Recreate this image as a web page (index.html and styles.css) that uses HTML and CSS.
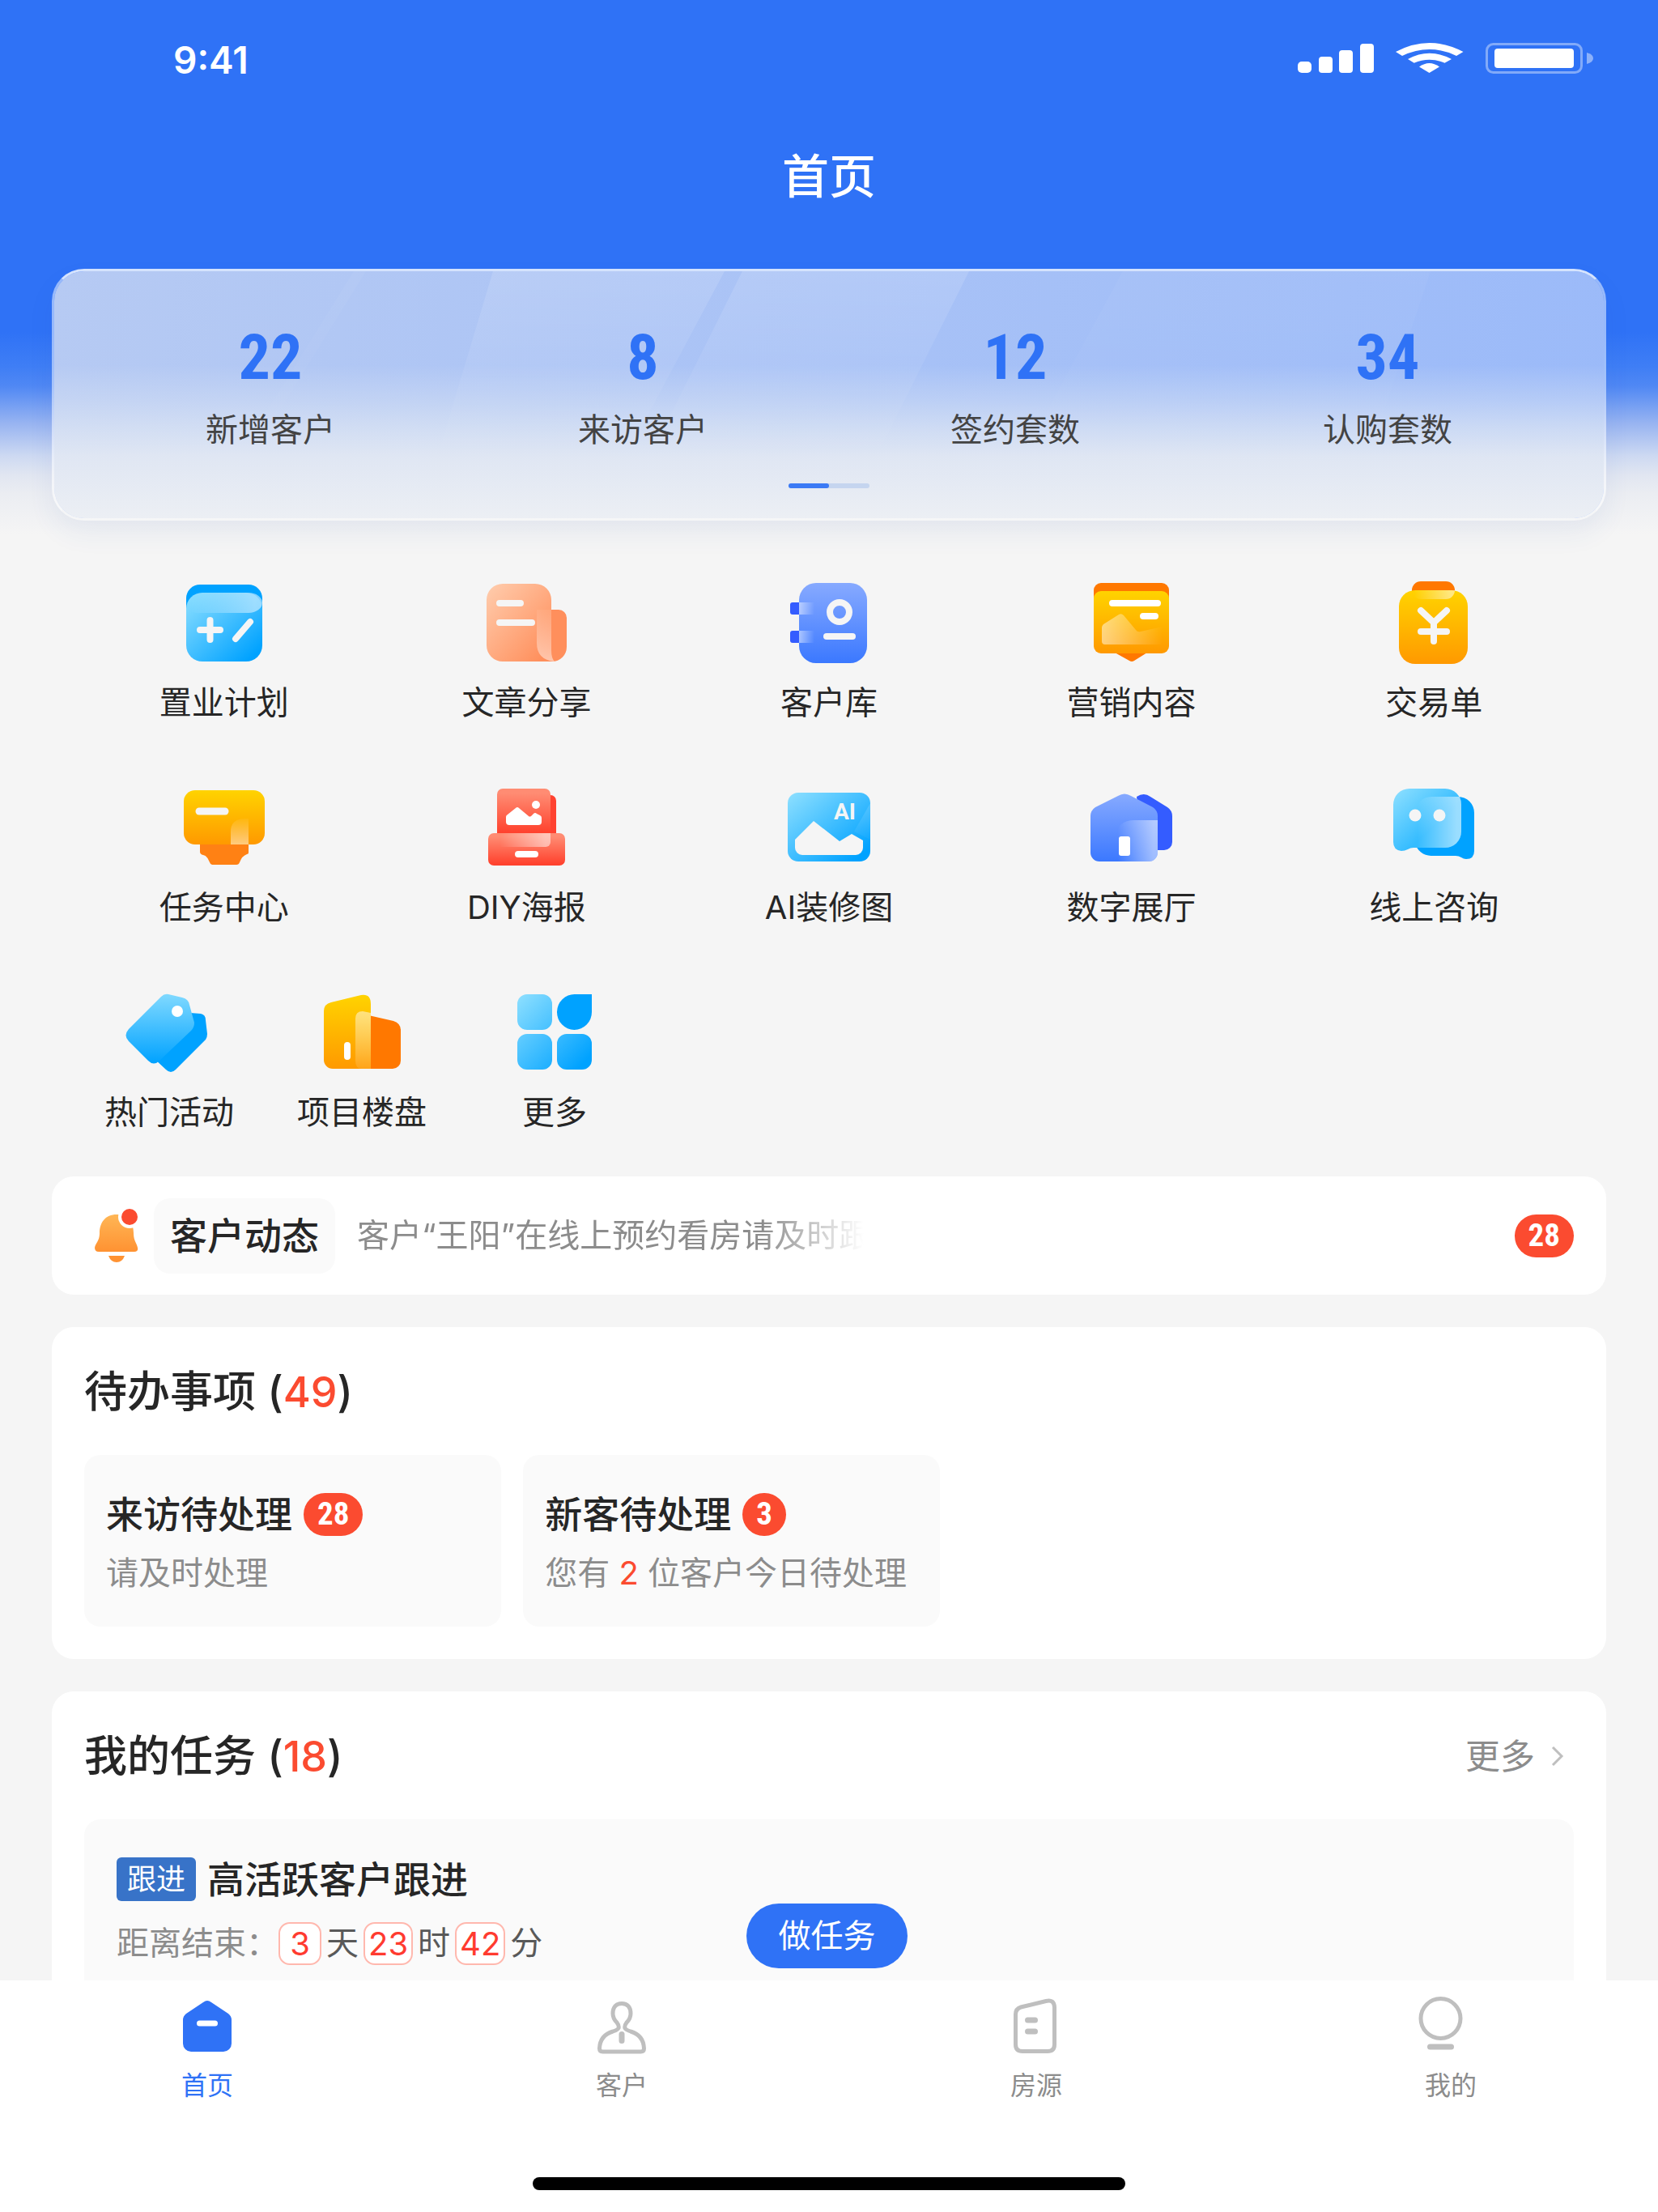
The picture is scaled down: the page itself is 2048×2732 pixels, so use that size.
FILE: index.html
```html
<!DOCTYPE html>
<html lang="zh-CN">

<head>
    <meta charset="UTF-8">
    <meta name="viewport" content="width=device-width, initial-scale=1.0">
    <title>首页</title>
    <link rel="stylesheet" href="styles.css">
</head>

<body>
    <!-- shared gradients -->
    <svg class="defs" width="0" height="0" aria-hidden="true">
        <defs>
            <linearGradient id="sky" x1="0" y1="0" x2="1" y2="1">
                <stop offset="0" stop-color="#8fe0ff" />
                <stop offset="0.9" stop-color="#00a2ff" />
            </linearGradient>
            <linearGradient id="skyDown" x1="0" y1="0" x2="0" y2="1">
                <stop offset="0" stop-color="#80d9ff" />
                <stop offset="1" stop-color="#00a2ff" />
            </linearGradient>
            <linearGradient id="chat" x1="0" y1="0" x2="1" y2="1">
                <stop offset="0" stop-color="#8fe0ff" />
                <stop offset="0.6" stop-color="#35bcff" />
                <stop offset="1" stop-color="#35bcff" />
            </linearGradient>
            <linearGradient id="peach" x1="0" y1="0" x2="1" y2="1">
                <stop offset="0" stop-color="#ffcdae" />
                <stop offset="0.9" stop-color="#ff8f5c" />
            </linearGradient>
            <linearGradient id="indigo" x1="0" y1="0" x2="0" y2="1">
                <stop offset="0" stop-color="#87aaff" />
                <stop offset="1" stop-color="#3b78ff" />
            </linearGradient>
            <linearGradient id="gold" x1="0" y1="0" x2="0" y2="1">
                <stop offset="0" stop-color="#ffd300" />
                <stop offset="1" stop-color="#ff9900" />
            </linearGradient>
            <linearGradient id="coral" x1="0" y1="0" x2="0" y2="1">
                <stop offset="0.1" stop-color="#ff8c73" />
                <stop offset="0.95" stop-color="#ff422e" />
            </linearGradient>
            <linearGradient id="orange" x1="0" y1="0" x2="0" y2="1">
                <stop offset="0" stop-color="#ffb655" />
                <stop offset="1" stop-color="#ff9232" />
            </linearGradient>
            <linearGradient id="shineRight" x1="0" y1="0" x2="1" y2="0">
                <stop offset="0.05" stop-color="#fff" stop-opacity="0" />
                <stop offset="0.9" stop-color="#fff" stop-opacity="0.5" />
            </linearGradient>
            <linearGradient id="shineLeft" x1="0" y1="0" x2="1" y2="0">
                <stop offset="0" stop-color="#fff" stop-opacity="0.5" />
                <stop offset="1" stop-color="#fff" stop-opacity="0" />
            </linearGradient>
            <linearGradient id="shineDown" x1="0" y1="0" x2="0" y2="1">
                <stop offset="0" stop-color="#fff" stop-opacity="0.05" />
                <stop offset="1" stop-color="#fff" stop-opacity="0.5" />
            </linearGradient>
            <linearGradient id="shineUp" x1="0" y1="0" x2="0" y2="1">
                <stop offset="0" stop-color="#fff" stop-opacity="0.5" />
                <stop offset="1" stop-color="#fff" stop-opacity="0.1" />
            </linearGradient>
            <linearGradient id="streak" x1="0" y1="0" x2="0" y2="1">
                <stop offset="0" stop-color="#fff" stop-opacity="0.13" />
                <stop offset="1" stop-color="#fff" stop-opacity="0" />
            </linearGradient>
        </defs>
    </svg>

    <div class="page">
        <header class="header">
            <div class="status-bar">
                <span class="time">9:41</span>
                <svg class="status-icons" viewBox="0 0 365 42" aria-hidden="true">
                    <g fill="#fff">
                        <rect x="0" y="25" width="17" height="14" rx="5" />
                        <rect x="26" y="19" width="17" height="20" rx="4" />
                        <rect x="51" y="11" width="17" height="28" rx="4" />
                        <rect x="77" y="3" width="17" height="36" rx="4" />
                        <path d="M121 13Q162.500 -9 204.500 13L196 18Q162.500 2 129 18Z" />
                        <path d="M136 22Q162.500 7.400 190 22L181.500 26.700Q162.500 18.700 143.700 26.700Z" />
                        <path d="M150 31.500Q162.500 22.500 175 31.500L162.500 39Z" />
                        <rect x="243" y="9" width="98" height="24" rx="4" />
                    </g>
                    <rect x="233.500" y="3.500" width="117" height="35" rx="8" fill="none" stroke="#fff" stroke-width="3" opacity="0.4" />
                    <path d="M357 14q8 2 8 7t-8 7z" fill="#fff" opacity="0.45" />
                </svg>
            </div>
            <h1 class="title">首页</h1>
        </header>

        <main class="content">
            <section class="stats">
                <svg class="stats-bg" viewBox="0 0 1914 305" preserveAspectRatio="none" aria-hidden="true">
                    <path d="M542 0H828L700 240H470Z" fill="url(#streak)" />
                    <path d="M850 0H1130L1010 240H730Z" fill="url(#streak)" />
                    <path d="M370 0H385L230 250H215Z" fill="url(#streak)" opacity="0.3" />
                    <path d="M1320 0H1700L1620 240H1190Z" fill="url(#streak)" opacity="0.3" />
                </svg>
                <ul class="stats-list">
                    <li><strong>22</strong><span>新增客户</span></li>
                    <li><strong>8</strong><span>来访客户</span></li>
                    <li><strong>12</strong><span>签约套数</span></li>
                    <li><strong>34</strong><span>认购套数</span></li>
                </ul>
                <div class="slider"><i></i></div>
            </section>

            <nav class="menu">
                <div class="menu-row">
                    <a href="#" class="menu-item">
                        <svg viewBox="0 0 112 112">
                            <rect x="9" y="10" width="94" height="50" rx="17" fill="#00a2ff" />
                            <rect x="9" y="20" width="94" height="85" rx="20" fill="url(#sky)" />
                            <path d="M29 20H86a17 12.500 0 0 1 0 25H26a17 17 0 0 1-17-8A20 20 0 0 1 29 20Z" fill="url(#shineRight)" />
                            <path d="M26 66H51M38.500 54V78M70 77L88 56" stroke="#f5f5f5" stroke-width="8" stroke-linecap="round" />
                        </svg>
                        <span>置业计划</span>
                    </a>
                    <a href="#" class="menu-item">
                        <svg viewBox="0 0 112 112">
                            <path d="M80 41H96a10 10 0 0 1 10 10V87a18 18 0 0 1-18 18H80Z" fill="#ff8f5c" />
                            <path d="M27 9H67a20 20 0 0 1 20 20V91q0 10 4 14H27A20 20 0 0 1 7 85V29A20 20 0 0 1 27 9Z" fill="url(#peach)" />
                            <path d="M69 41H87V91q0 10 4 14Q69 103 69 82Z" fill="url(#shineDown)" />
                            <path d="M23 33H49M23 57H63" stroke="#f5f5f5" stroke-width="8" stroke-linecap="round" />
                        </svg>
                        <span>文章分享</span>
                    </a>
                    <a href="#" class="menu-item">
                        <svg viewBox="0 0 112 112">
                            <rect x="8" y="32" width="20" height="15" rx="3" fill="#345cff" />
                            <rect x="8" y="67" width="20" height="15" rx="3" fill="#345cff" />
                            <rect x="19" y="8" width="84" height="99" rx="21" fill="url(#indigo)" />
                            <path d="M19 32H38V47H19ZM19 67H38V82H19Z" fill="url(#shineLeft)" />
                            <circle cx="69" cy="44" r="12" fill="none" stroke="#f5f5f5" stroke-width="8" />
                            <path d="M53 74H85" stroke="#f5f5f5" stroke-width="8" stroke-linecap="round" />
                        </svg>
                        <span>客户库</span>
                    </a>
                    <a href="#" class="menu-item">
                        <svg viewBox="0 0 112 112">
                            <rect x="9" y="8" width="93" height="40" rx="9" fill="#ff7800" />
                            <path d="M35 94H75L59 104Q56 106 53 104Z" fill="#ff7800" />
                            <rect x="9" y="18" width="93" height="77" rx="9" fill="url(#gold)" />
                            <path d="M19 63Q19 61 21 59L40 47Q43 45 46 48L61 66Q63 69 67 68L94 62V84H23Q19 84 19 80Z" fill="url(#shineLeft)" />
                            <path d="M32 33H88M70 49H85" stroke="#fff" stroke-width="8" stroke-linecap="round" />
                        </svg>
                        <span>营销内容</span>
                    </a>
                    <a href="#" class="menu-item">
                        <svg viewBox="0 0 112 112">
                            <rect x="29" y="6" width="53" height="22" rx="11" fill="#ff7800" />
                            <rect x="13" y="17" width="85" height="91" rx="20" fill="url(#gold)" />
                            <path d="M29 17H82a11 11 0 0 1-11 11H40A11 11 0 0 1 29 17Z" fill="url(#shineRight)" />
                            <path d="M40 42L56 57L72 42M56 57V80M40 68H72" fill="none" stroke="#f5f5f5" stroke-width="8" stroke-linecap="round" />
                        </svg>
                        <span>交易单</span>
                    </a>
                </div>

                <div class="menu-row">
                    <a href="#" class="menu-item">
                        <svg viewBox="0 0 112 112">
                            <path d="M26 76H86V88Q86 90 84 90Q78 92 75 100Q74 103 71 103H41Q39 103 38 100Q35 92 30 91Q26 90 26 87Z" fill="#ff8114" />
                            <rect x="6" y="11" width="100" height="67" rx="14" fill="url(#gold)" />
                            <path d="M64 78V62Q64 46 82 46H86V78Z" fill="url(#shineDown)" />
                            <path d="M25 37H57" stroke="#f5f5f5" stroke-width="9" stroke-linecap="round" />
                        </svg>
                        <span>任务中心</span>
                    </a>
                    <a href="#" class="menu-item">
                        <svg viewBox="0 0 112 112">
                            <rect x="60" y="17" width="33" height="55" rx="7" fill="#ff4230" />
                            <path d="M27 9H79a7 7 0 0 1 7 7V66H20V16a7 7 0 0 1 7-7Z" fill="url(#coral)" />
                            <rect x="9" y="64" width="95" height="40" rx="7" fill="url(#coral)" />
                            <path d="M20 64H86V75a6 6 0 0 1-6 6H20Z" fill="url(#shineRight)" />
                            <path d="M31 44Q31 42 33 41L43 33Q45 31 47 33L59 43Q60 44 62 43L65 40Q67 38 69 40L73 42Q75 43 75 45V50Q75 54 71 54H35Q31 54 31 50Z" fill="#fff" />
                            <circle cx="68" cy="29" r="5" fill="#fff" />
                            <path d="M46 90H67" stroke="#fff" stroke-width="8" stroke-linecap="round" />
                        </svg>
                        <span>DIY海报</span>
                    </a>
                    <a href="#" class="menu-item">
                        <svg viewBox="0 0 112 112">
                            <rect x="5" y="14" width="102" height="85" rx="13" fill="url(#sky)" />
                            <path d="M107 27L87 62L107 72Z" fill="url(#shineUp)" opacity="0.3" />
                            <path d="M14 72L37 49L69 74L84 65L98 73V82a9 9 0 0 1-9 9H23a9 9 0 0 1-9-9Z" fill="#f5f5f5" />
                            <text x="62" y="47" class="ai-mark">AI</text>
                        </svg>
                        <span>AI装修图</span>
                    </a>
                    <a href="#" class="menu-item">
                        <svg viewBox="0 0 112 112">
                            <path d="M62 19Q71 13 79 19L100 32Q106 36 106 43V75a10 10 0 0 1-10 10H70Z" fill="#345cff" />
                            <path d="M39 18Q47 13 55 18L82 32Q88 36 88 43V88a11 11 0 0 1-11 11H16A11 11 0 0 1 5 88V43Q5 36 11 32Z" fill="url(#indigo)" />
                            <path d="M36 66Q40 48 59 48H88V88a11 11 0 0 1-11 11H36Z" fill="url(#shineRight)" />
                            <rect x="40" y="68" width="14" height="24" rx="3" fill="#fff" />
                        </svg>
                        <span>数字展厅</span>
                    </a>
                    <a href="#" class="menu-item">
                        <svg viewBox="0 0 112 112">
                            <path d="M53 19H86a20 20 0 0 1 20 20V86Q106 96 96 96Q93 96 90 94Q87 92 83 92H53A20 20 0 0 1 33 76V39A20 20 0 0 1 53 19Z" fill="#00a2ff" />
                            <path d="M26 9H70a20 20 0 0 1 20 20V62a20 20 0 0 1-20 20H31Q27 82 24 84Q20 86 16 86Q6 85 6 75V29A20 20 0 0 1 26 9Z" fill="url(#chat)" />
                            <path d="M53 19H88Q90 23 90 29V62a20 20 0 0 1-20 20H34L33 39A20 20 0 0 1 53 19Z" fill="url(#shineRight)" />
                            <circle cx="33" cy="42" r="7.500" fill="#f5f5f5" />
                            <circle cx="63" cy="42" r="7.500" fill="#f5f5f5" />
                        </svg>
                        <span>线上咨询</span>
                    </a>
                </div>

                <div class="menu-row menu-row-last">
                    <a href="#" class="menu-item">
                        <svg viewBox="0 0 112 112">
                            <path d="M82 33L95 34Q101 35 101 42L103 59Q103 63 101 66L64 103Q58 109 52 103L38 90Z" fill="#00a2ff" />
                            <path d="M46 13Q50 9 55 10L72 14Q80 16 81 23L87 45Q87 51 83 55L44 92Q37 99 30 92L6 68Q-1 61 6 53Z" fill="url(#skyDown)" />
                            <circle cx="66" cy="31" r="7" fill="#fff" />
                        </svg>
                        <span>热门活动</span>
                    </a>
                    <a href="#" class="menu-item">
                        <svg viewBox="0 0 112 112">
                            <path d="M60 35L95 43Q104 46 104 54V92a10 10 0 0 1-10 10H60Z" fill="#ff7800" />
                            <path d="M9 31Q9 22 18 20L55 11Q67 9 67 22V102H20A11 11 0 0 1 9 91Z" fill="url(#gold)" />
                            <path d="M48 40Q48 31 57 31L67 33V102H56Q48 102 48 92Z" fill="url(#shineUp)" />
                            <rect x="34" y="69" width="8" height="22" rx="4" fill="#fff" />
                        </svg>
                        <span>项目楼盘</span>
                    </a>
                    <a href="#" class="menu-item">
                        <svg viewBox="0 0 112 112">
                            <path d="M22 10H41a12 12 0 0 1 12 12V42a12 12 0 0 1-12 12H22a12 12 0 0 1-12-12V22a12 12 0 0 1 12-12ZM22 59H41a12 12 0 0 1 12 12V91a12 12 0 0 1-12 12H22a12 12 0 0 1-12-12V71a12 12 0 0 1 12-12ZM71 59H90a12 12 0 0 1 12 12V91a12 12 0 0 1-12 12H71a12 12 0 0 1-12-12V71a12 12 0 0 1 12-12Z" fill="url(#sky)" />
                            <path d="M81 10H102V32a21.500 22 0 1 1-21-22Z" fill="#00a2ff" />
                        </svg>
                        <span>更多</span>
                    </a>
                </div>
            </nav>

            <section class="card notice">
                <svg class="bell" viewBox="0 0 54 66" aria-hidden="true">
                    <path d="M27 7C13 7 6 17 6 30C6 40 1 42 0 48Q0 53 5 53H49Q54 53 53 48C52 42 48 40 48 30C48 17 41 7 27 7Z" fill="url(#orange)" />
                    <path d="M17 58H37Q34 66 27 66T17 58Z" fill="#ff9232" />
                    <circle cx="43" cy="10" r="14" fill="#fff" />
                    <circle cx="43" cy="10" r="10" fill="#fb4b30" />
                </svg>
                <strong class="notice-tag">客户动态</strong>
                <p class="notice-text">客户“王阳”在线上预约看房请及时跟</p>
                <span class="badge">28</span>
            </section>

            <section class="card">
                <div class="card-head">
                    <h2>待办事项 (<em>49</em>)</h2>
                </div>
                <div class="todo-list">
                    <a href="#" class="todo">
                        <h3>来访待处理 <span class="badge">28</span></h3>
                        <p>请及时处理</p>
                    </a>
                    <a href="#" class="todo">
                        <h3>新客待处理 <span class="badge">3</span></h3>
                        <p>您有 <em>2</em> 位客户今日待处理</p>
                    </a>
                </div>
            </section>

            <section class="card">
                <div class="card-head">
                    <h2>我的任务 (<em>18</em>)</h2>
                    <a href="#" class="more">更多
                        <svg viewBox="0 0 28 28" aria-hidden="true">
                            <path d="M8 3L19 14L8 25" fill="none" stroke="#bfbfbf" stroke-width="3" />
                        </svg>
                    </a>
                </div>
                <div class="task">
                    <div class="task-info">
                        <h3><span class="tag">跟进</span>高活跃客户跟进</h3>
                        <p class="countdown">距离结束：<b>3</b><span>天</span><b>23</b><span>时</span><b>42</b><span>分</span></p>
                    </div>
                    <button type="button" class="btn">做任务</button>
                </div>
            </section>
        </main>

        <footer class="tabbar">
            <nav class="tabs">
                <a href="#" class="tab active">
                    <svg viewBox="0 -2 64 76">
                        <path d="M27 9Q32 5 37 9L58 23Q62 26 62 31V60a10 10 0 0 1-10 10H12A10 10 0 0 1 2 60V31Q2 26 6 23Z" fill="#2f72f6" />
                        <path d="M22.500 35H41.500" stroke="#fff" stroke-width="7" stroke-linecap="round" />
                    </svg>
                    <span>首页</span>
                </a>
                <a href="#" class="tab">
                    <svg viewBox="0 -2 64 76">
                        <path d="M28 41Q29 38 26 34C22 30 21 27 21 23C21 15 25 10.500 32 10.500S43 15 43 23C43 27 42 30 38 34Q35 38 36 41Q37 43 43 45C53 48 59 54 59.500 66Q59.500 70 55.500 70H8.500Q4.500 70 4.500 66C5 54 11 48 21 45Q27 43 28 41Z" />
                        <path d="M32 48.500V56.500" stroke-width="7" />
                    </svg>
                    <span>客户</span>
                </a>
                <a href="#" class="tab">
                    <svg viewBox="0 -2 64 76">
                        <path d="M6.500 24Q6.500 17 13 15L44 7.500Q54 5 54.500 15V61Q54.500 69.500 46 69.500H15Q6.500 69.500 6.500 61Z" />
                        <path d="M21.500 31H30.500M21.500 45H30.500" stroke-width="7" />
                    </svg>
                    <span>房源</span>
                </a>
                <a href="#" class="tab">
                    <svg viewBox="0 -2 64 76">
                        <circle cx="19.500" cy="29" r="24.500" />
                        <path d="M6.500 64H32.500" stroke-width="7" />
                    </svg>
                    <span>我的</span>
                </a>
            </nav>
            <div class="home-bar"></div>
        </footer>
    </div>
</body>

</html>
```
FILE: styles.css
```css
* {
    box-sizing: border-box;
    margin: 0;
    padding: 0;
}

body {
    font-family: "Inter", "Noto Sans CJK SC", sans-serif;
    font-size: 40px;
    line-height: 56px;
    color: #262626;
    background-color: #f5f5f5;
}

a {
    color: inherit;
    text-decoration: none;
}

em,
i {
    font-style: normal;
}

svg {
    display: block;
    flex-shrink: 0;
}

.defs {
    position: absolute;
}

.page {
    display: flex;
    flex-direction: column;
    height: 100vh;
    overflow: hidden;
    background: linear-gradient(180deg, #2f72f6 0, #2f72f6 410px, #3f7ef5 453px, #5088f4 477px, #98b4f1 523px, #cdd9f2 563px, #e1e6f1 587px, #ebedf2 610px, #f5f5f5 660px);
}

/* header */
.status-bar {
    display: flex;
    align-items: center;
    justify-content: space-between;
    height: 144px;
    padding: 0 80px 0 214px;
}

.time {
    padding-top: 3px;
    font-size: 46px;
    font-weight: 600;
    color: #fff;
}

.status-icons {
    width: 365px;
    height: 42px;
}

.title {
    font-size: 58px;
    font-weight: 500;
    line-height: 148px;
    text-align: center;
    color: #fff;
}

.content {
    flex: 1;
    min-height: 0;
    overflow: hidden;
    padding: 40px 64px 0;
}

/* stats */
.stats {
    position: relative;
    padding: 71px 37px 37px;
    border: 3px solid rgba(255, 255, 255, 0.8);
    border-color: rgba(255, 255, 255, 0.8) rgba(255, 255, 255, 0.5) rgba(255, 255, 255, 0.3);
    border-radius: 40px;
    background:
        linear-gradient(180deg, rgba(222, 230, 243, 0) 38%, rgba(222, 230, 243, 0.4) 53%, rgba(222, 230, 243, 0.7) 63%, rgba(226, 232, 243, 0.95) 75%, #eceff4 100%),
        linear-gradient(100deg, #b6caf3, #9bbaf9);
    background-clip: padding-box;
    box-shadow: 0 16px 32px rgba(40, 90, 170, 0.07);
}

.stats-bg {
    position: absolute;
    top: 0;
    left: 0;
    width: 100%;
    height: 100%;
}

.stats-list {
    position: relative;
    display: flex;
    list-style: none;
}

.stats-list li {
    display: flex;
    flex: 1;
    flex-direction: column;
    align-items: center;
    gap: 25px;
}

.stats-list strong {
    font-family: "Roboto Condensed", "Liberation Sans Narrow", "Roboto", sans-serif;
    font-size: 78px;
    line-height: 72px;
    color: #2f72f6;
}

.stats-list span {
    color: #434343;
}

.slider {
    position: relative;
    width: 100px;
    height: 6px;
    margin: 38px auto 0;
    border-radius: 3px;
    background-color: #c5d5ef;
}

.slider i {
    display: block;
    width: 50%;
    height: 100%;
    border-radius: 3px;
    background-color: #3b7af5;
}

/* menu */
.menu {
    display: flex;
    flex-direction: column;
    gap: 65px;
    padding: 69px 26px 47px;
}

.menu-row {
    display: flex;
}

.menu-item {
    display: flex;
    flex: 1;
    flex-direction: column;
    align-items: center;
    gap: 12px;
    line-height: 64px;
}

.menu-item svg {
    width: 112px;
    height: 112px;
}

.menu-row-last .menu-item {
    flex: 0 0 238px;
}

.ai-mark {
    font-family: "Roboto", sans-serif;
    font-size: 28px;
    font-weight: 700;
    fill: #f5f5f5;
}

/* cards */
.card {
    margin-bottom: 40px;
    padding: 0 40px 40px;
    border-radius: 27px;
    background-color: #fff;
}

.card em {
    color: #fb4b30;
}

.card h3 {
    display: flex;
    align-items: center;
    gap: 14px;
    font-size: 46px;
    font-weight: 500;
    line-height: 54px;
}

.badge {
    min-width: 53px;
    padding: 0 17px;
    border-radius: 27px;
    background-color: #fb4b30;
    font-family: "Roboto Condensed", "Liberation Sans Narrow", "Roboto", sans-serif;
    font-size: 39px;
    font-weight: 700;
    line-height: 53px;
    text-align: center;
    color: #fff;
}

.notice {
    display: flex;
    align-items: center;
    height: 146px;
    padding: 0 40px 0 53px;
}

.bell {
    width: 54px;
    height: 66px;
}

.notice-tag {
    margin: 0 27px 0 19px;
    padding: 0 20px;
    border-radius: 20px;
    background-color: #fafafa;
    font-size: 46px;
    font-weight: 500;
    line-height: 93px;
}

/* the tail of the message fades out */
.notice-text {
    white-space: nowrap;
    color: #8c8c8c;
    -webkit-mask-image: linear-gradient(90deg, #000 500px, transparent 626px);
    mask-image: linear-gradient(90deg, #000 500px, transparent 626px);
}

.notice .badge {
    margin-left: auto;
}

.card-head {
    display: flex;
    align-items: center;
    justify-content: space-between;
    height: 158px;
    padding-top: 2px;
}

.card-head h2 {
    font-size: 53px;
    font-weight: 500;
}

.card-head em {
    font-size: 52px;
}

.more {
    display: flex;
    align-items: center;
    gap: 14px;
    padding-right: 6px;
    font-size: 43px;
    color: #8c8c8c;
}

.more svg {
    width: 28px;
    height: 28px;
}

.todo-list {
    display: flex;
    gap: 27px;
}

.todo {
    width: 28%;
    height: 212px;
    padding: 46px 27px;
    border-radius: 20px;
    background-color: #fafafa;
}

.todo p {
    margin-top: 18px;
    white-space: nowrap;
    color: #8c8c8c;
}

/* task */
.task {
    display: flex;
    align-items: center;
    padding: 41px 40px;
    border-radius: 20px;
    background-color: #fafafa;
}

.task-info {
    flex: 0 0 778px;
    min-height: 206px;
    padding-top: 6px;
}

.tag {
    padding: 0 13px;
    border-radius: 6px;
    background-color: #3873c8;
    font-size: 36px;
    font-weight: 400;
    color: #fff;
}

.countdown {
    display: flex;
    align-items: center;
    margin-top: 24px;
    color: #8c8c8c;
}

.countdown b {
    min-width: 53px;
    padding: 0 4px;
    border: 2px solid #ffb8ae;
    border-radius: 14px;
    background-color: #fff;
    font-weight: 400;
    line-height: 49px;
    text-align: center;
    color: #ff3b30;
}

.countdown span {
    margin: 0 6px;
    color: #595959;
}

.btn {
    width: 199px;
    height: 80px;
    border: none;
    border-radius: 40px;
    background-color: #2f72f6;
    font: inherit;
    color: #fff;
}

/* bottom tabs */
.tabbar {
    padding: 16px 0 27px;
    background-color: #fff;
}

.tabs {
    display: flex;
}

.tab {
    display: flex;
    flex: 1;
    flex-direction: column;
    align-items: center;
    gap: 18px;
    font-size: 32px;
    line-height: 40px;
    color: #8c8c8c;
}

.tab svg {
    width: 64px;
    height: 76px;
    overflow: visible;
    fill: none;
    stroke: #bfbfbf;
    stroke-width: 5;
    stroke-linecap: round;
}

.tab.active {
    color: #2f72f6;
}

.tab.active svg {
    stroke: none;
}

.home-bar {
    width: 732px;
    height: 16px;
    margin: 93px auto 0;
    border-radius: 8px;
    background-color: #000;
}
```
